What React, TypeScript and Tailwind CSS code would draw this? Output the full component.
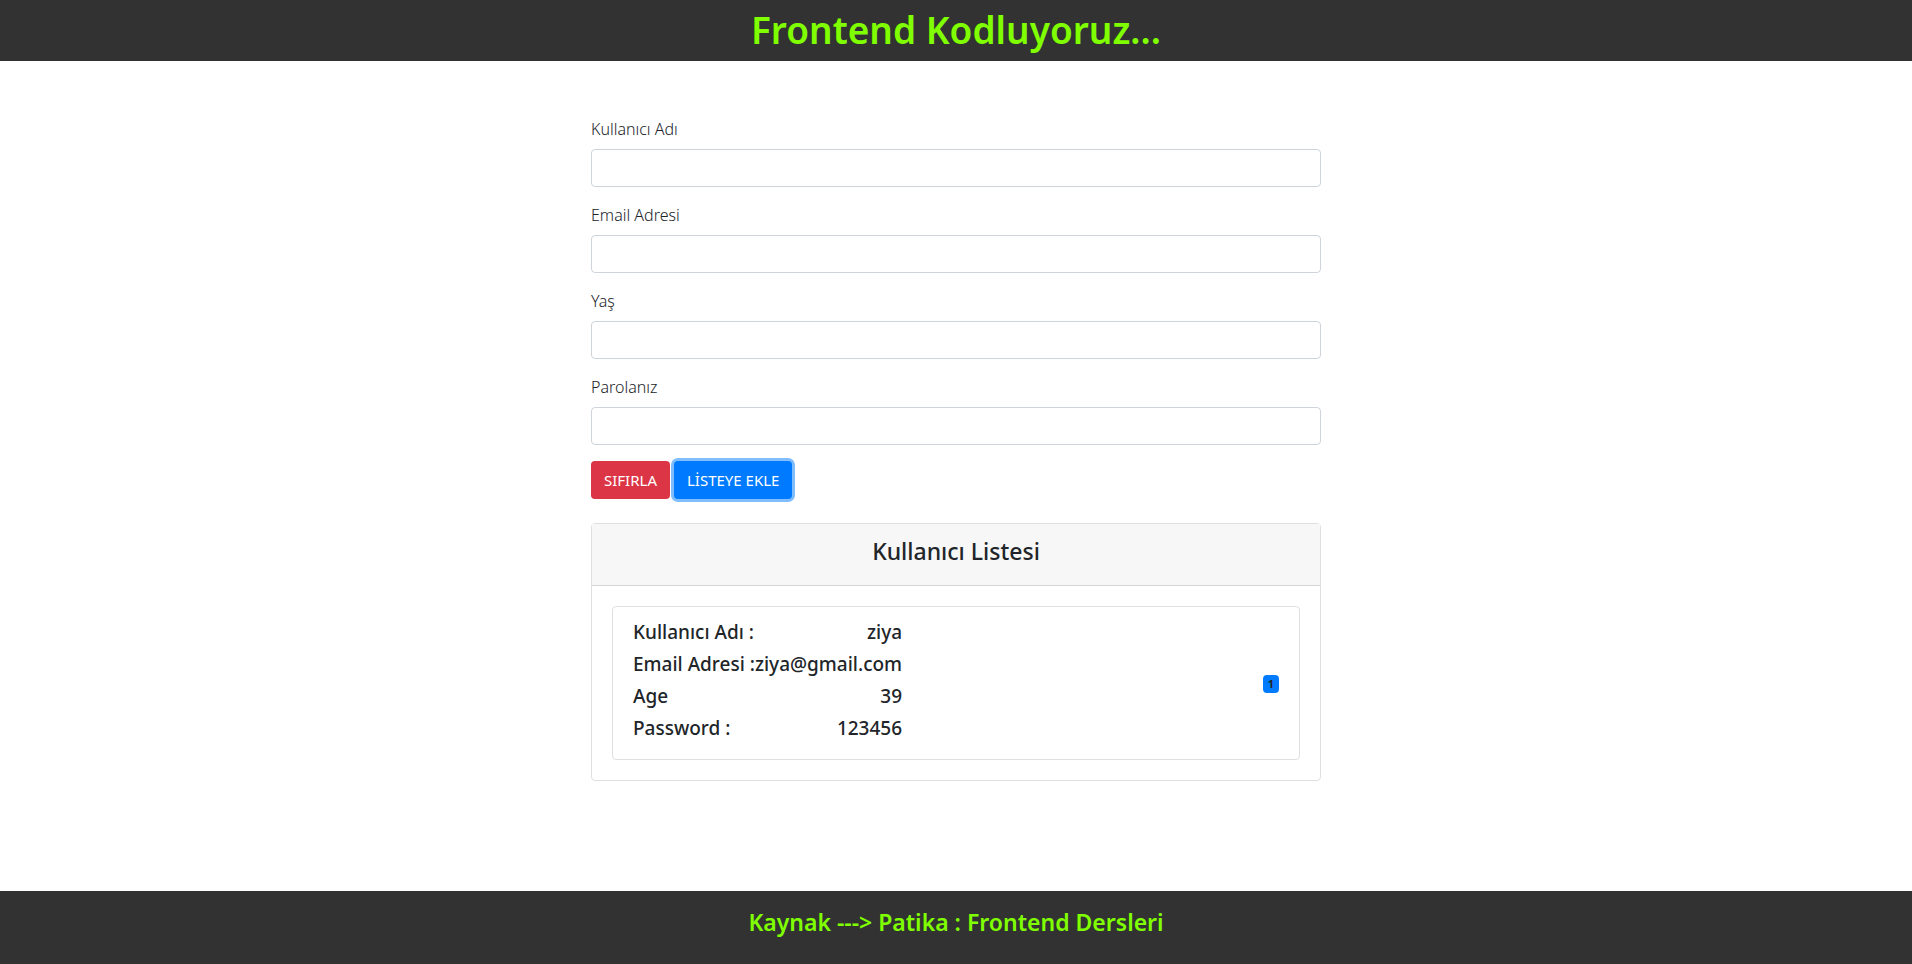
import { useState } from "react";

const fields = [
  { id: "username", label: "Kullanıcı Adı", type: "text" },
  { id: "email", label: "Email Adresi", type: "email" },
  { id: "age", label: "Yaş", type: "text" },
  { id: "password", label: "Parolanız", type: "password" },
];

type User = { username: string; email: string; age: string; password: string };

const emptyUser: User = { username: "", email: "", age: "", password: "" };

function UserItem({ user, index }: { user: User; index: number }) {
  const rows = [
    ["Kullanıcı Adı :", user.username],
    ["Email Adresi :", user.email],
    ["Age", user.age],
    ["Password :", user.password],
  ];
  return (
    <li className="flex items-center justify-between rounded border border-[#dfdfdf] px-5 pt-[13px] pb-[11px]">
      <dl className="text-[19px] leading-6 font-medium">
        {rows.map(([name, value]) => (
          <div key={name} className="mb-2 flex justify-between">
            <dt>{name}</dt>
            <dd>{value}</dd>
          </div>
        ))}
      </dl>
      <span className="rounded bg-[#007bff] px-[5px] py-[3px] text-[11px] leading-3 font-bold">{index}</span>
    </li>
  );
}

export default function App() {
  const [draft, setDraft] = useState<User>(emptyUser);
  const [users, setUsers] = useState<User[]>([
    { username: "ziya", email: "ziya@gmail.com", age: "39", password: "123456" },
  ]);

  return (
    <div className="flex min-h-screen flex-col bg-white font-['Noto_Sans','Open_Sans',sans-serif] text-[#212529]">
      <header className="bg-[#323232] pt-[6px] pb-[7px] text-center">
        <h1 className="text-[37px] leading-[48px] font-semibold text-[#7fff00]">Frontend Kodluyoruz...</h1>
      </header>

      <main className="mx-auto w-full max-w-[730px] flex-1 pt-14">
        <form
          onSubmit={(e) => {
            e.preventDefault();
            setUsers([...users, draft]);
            setDraft(emptyUser);
          }}
          onReset={() => setDraft(emptyUser)}
        >
          {fields.map((f) => (
            <div key={f.id} className="mb-4">
              <label htmlFor={f.id} className="mb-2 block text-base leading-6 font-light">
                {f.label}
              </label>
              <input
                id={f.id}
                type={f.type}
                value={draft[f.id as keyof User]}
                onChange={(e) => setDraft({ ...draft, [f.id]: e.target.value })}
                className="block h-[38px] w-full rounded border border-[#ced4da] bg-white px-3"
              />
            </div>
          ))}
          <div className="flex gap-1">
            <button type="reset" className="h-[38px] rounded bg-[#dc3545] px-[13px] text-[15px] leading-6 text-white">
              SIFIRLA
            </button>
            <button
              type="submit"
              className="h-[38px] rounded bg-[#007bff] px-[13px] text-[15px] leading-6 text-white ring-3 ring-[#7fbdff]"
            >
              LİSTEYE EKLE
            </button>
          </div>
        </form>

        <section className="mt-6 rounded border border-[#dfdfdf]">
          <h2 className="border-b border-[#d6d6d6] bg-[#f7f7f7] pt-[13px] pb-[19px] text-center text-[23px] leading-[29px] font-medium">
            Kullanıcı Listesi
          </h2>
          <ul className="flex flex-col gap-4 p-5">
            {users.map((u, i) => (
              <UserItem key={i} user={u} index={i + 1} />
            ))}
          </ul>
        </section>
      </main>

      <footer className="bg-[#323232] pt-[17px] pb-[27px] text-center">
        <p className="text-[23px] leading-[29px] font-semibold text-[#7fff00]">
          Kaynak ---&gt; Patika : Frontend Dersleri
        </p>
      </footer>
    </div>
  );
}
